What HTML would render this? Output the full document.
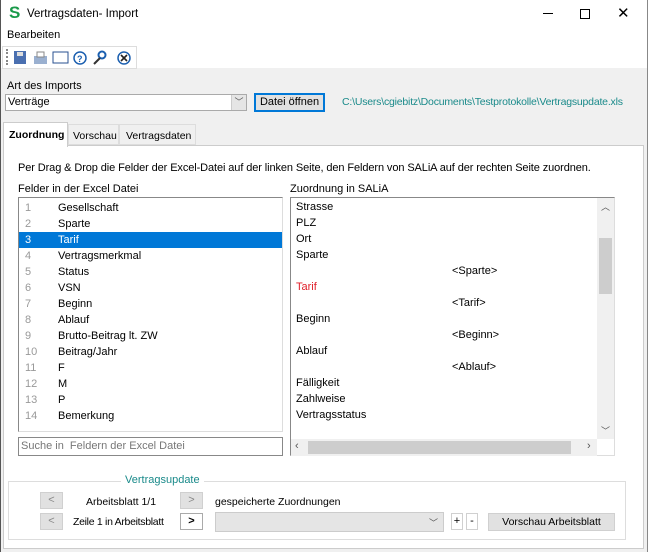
<!DOCTYPE html>
<html><head><meta charset="utf-8"><style>
*{box-sizing:border-box;margin:0;padding:0}
body{width:648px;height:552px;position:relative;background:#f0f0f0;font-family:"Liberation Sans",sans-serif;font-size:11px;color:#000;overflow:hidden}
.a{position:absolute;white-space:nowrap}
.row{position:absolute;height:16px;line-height:16px;left:0;right:0}
.btn{position:absolute;background:#e1e1e1;border:1px solid #d0d0d0;text-align:center;color:#888;font-size:11px}
</style></head><body>
<div class="a" style="left:0;top:0;width:648px;height:68px;background:#fff"></div>
<div class="a" style="left:0;top:0;width:1px;height:552px;background:#555"></div>
<div class="a" style="left:647px;top:0;width:1px;height:552px;background:#888"></div>
<div class="a" style="left:9px;top:3px;font-weight:bold;color:#1a9a4a;font-size:17px">S</div>
<div class="a" style="left:27px;top:8px;font-size:11.5px">Vertragsdaten- Import</div>
<div class="a" style="left:543px;top:13px;width:10px;height:1px;background:#000"></div>
<div class="a" style="left:580px;top:9px;width:10px;height:10px;border:1px solid #000"></div>
<div class="a" style="left:617px;top:4px;font-size:15px">✕</div>
<div class="a" style="left:7px;top:29px">Bearbeiten</div>
<div class="a" style="left:2px;top:46px;width:135px;height:23px;border:1px solid #ddd;background:#fff"></div>
<div class="a" style="left:6px;top:49px;width:2px;height:16px;border-left:2px dotted #888"></div>
<svg class="a" style="left:12px;top:49px" width="125" height="18">
<rect x="2" y="2" width="12" height="13" fill="#4a6fb0"/><rect x="5" y="3" width="6" height="4" fill="#ddd"/>
<rect x="22" y="7" width="13" height="8" fill="#9ab0d0"/><rect x="25" y="3" width="7" height="5" fill="#fff" stroke="#888"/>
<rect x="41" y="3" width="15" height="11" fill="#fff" stroke="#2a5090"/>
<circle cx="68" cy="9" r="6" fill="#fff" stroke="#1b5fb0" stroke-width="1.5"/><text x="65" y="13" font-size="9" fill="#1b5fb0" font-weight="bold">?</text>
<circle cx="90" cy="6" r="3.5" fill="none" stroke="#1b5fb0" stroke-width="2"/><line x1="88" y1="9" x2="82" y2="15" stroke="#333" stroke-width="2"/>
<circle cx="112" cy="9" r="6" fill="#fff" stroke="#1b5fb0" stroke-width="1.5"/><path d="M109 6l6 6M115 6l-6 6" stroke="#222" stroke-width="1.6"/>
</svg>
<div class="a" style="left:7px;top:80px">Art des Imports</div>
<div class="a" style="left:5px;top:94px;width:242px;height:17px;background:#fff;border:1px solid #aaa;padding-left:2px;line-height:15px">Verträge</div>
<div class="a" style="left:231px;top:95px;width:15px;height:15px;background:#e5e5e5;border-left:1px solid #ccc;text-align:center;font-size:9px;line-height:15px;color:#555">﹀</div>
<div class="a" style="left:254px;top:93px;width:71px;height:19px;background:#e1e1e1;border:2px solid #0078d7;text-align:center;line-height:15px">Datei öffnen</div>
<div class="a" style="left:342px;top:96px;color:#1a8a8a;font-size:10.5px;letter-spacing:-0.2px">C:\Users\cgiebitz\Documents\Testprotokolle\Vertragsupdate.xls</div>
<div class="a" style="left:3px;top:145px;width:641px;height:404px;background:#fff;border:1px solid #ccc"></div>
<div class="a" style="left:3px;top:122px;width:65px;height:25px;background:#fff;border:1px solid #ccc;border-bottom:none;font-weight:bold;padding:6px 0 0 5px;font-size:10.5px">Zuordnung</div>
<div class="a" style="left:68px;top:124px;width:51px;height:21px;background:#f0f0f0;border:1px solid #ddd;padding:5px 0 0 4px;font-size:10.5px">Vorschau</div>
<div class="a" style="left:119px;top:124px;width:77px;height:21px;background:#f0f0f0;border:1px solid #ddd;padding:5px 0 0 6px;font-size:10.5px">Vertragsdaten</div>
<div class="a" style="left:18px;top:162px;letter-spacing:-0.1px">Per Drag &amp; Drop die Felder der Excel-Datei auf der linken Seite, den Feldern von SALiA auf der rechten Seite zuordnen.</div>
<div class="a" style="left:18px;top:183px">Felder in der Excel Datei</div>
<div class="a" style="left:290px;top:183px">Zuordnung in SALiA</div>
<div class="a" style="left:18px;top:197px;width:265px;height:235px;border:1px solid #888;border-right-color:#ddd;border-bottom-color:#ddd">
<div class="row" style="top:2px"><span class="a" style="left:6px;color:#999">1</span><span class="a" style="left:39px">Gesellschaft</span></div>
<div class="row" style="top:18px"><span class="a" style="left:6px;color:#999">2</span><span class="a" style="left:39px">Sparte</span></div>
<div class="row" style="top:34px;background:#0078d7;color:#fff"><span class="a" style="left:6px">3</span><span class="a" style="left:39px">Tarif</span></div>
<div class="row" style="top:50px"><span class="a" style="left:6px;color:#999">4</span><span class="a" style="left:39px">Vertragsmerkmal</span></div>
<div class="row" style="top:66px"><span class="a" style="left:6px;color:#999">5</span><span class="a" style="left:39px">Status</span></div>
<div class="row" style="top:82px"><span class="a" style="left:6px;color:#999">6</span><span class="a" style="left:39px">VSN</span></div>
<div class="row" style="top:98px"><span class="a" style="left:6px;color:#999">7</span><span class="a" style="left:39px">Beginn</span></div>
<div class="row" style="top:114px"><span class="a" style="left:6px;color:#999">8</span><span class="a" style="left:39px">Ablauf</span></div>
<div class="row" style="top:130px"><span class="a" style="left:6px;color:#999">9</span><span class="a" style="left:39px">Brutto-Beitrag lt. ZW</span></div>
<div class="row" style="top:146px"><span class="a" style="left:6px;color:#999">10</span><span class="a" style="left:39px">Beitrag/Jahr</span></div>
<div class="row" style="top:162px"><span class="a" style="left:6px;color:#999">11</span><span class="a" style="left:39px">F</span></div>
<div class="row" style="top:178px"><span class="a" style="left:6px;color:#999">12</span><span class="a" style="left:39px">M</span></div>
<div class="row" style="top:194px"><span class="a" style="left:6px;color:#999">13</span><span class="a" style="left:39px">P</span></div>
<div class="row" style="top:210px"><span class="a" style="left:6px;color:#999">14</span><span class="a" style="left:39px">Bemerkung</span></div>
</div>
<div class="a" style="left:18px;top:437px;width:265px;height:19px;border:1px solid #888;padding-left:2px;line-height:17px;color:#777">Suche in&nbsp; Feldern der Excel Datei</div>
<div class="a" style="left:290px;top:197px;width:325px;height:259px;border:1px solid #888;border-right-color:#ddd;border-bottom-color:#ddd">
<div class="row" style="top:1px;left:5px">Strasse</div>
<div class="row" style="top:17px;left:5px">PLZ</div>
<div class="row" style="top:33px;left:5px">Ort</div>
<div class="row" style="top:49px;left:5px">Sparte</div>
<div class="row" style="top:65px;left:161px">&lt;Sparte&gt;</div>
<div class="row" style="top:81px;left:5px;color:#e0202a">Tarif</div>
<div class="row" style="top:97px;left:161px">&lt;Tarif&gt;</div>
<div class="row" style="top:113px;left:5px">Beginn</div>
<div class="row" style="top:129px;left:161px">&lt;Beginn&gt;</div>
<div class="row" style="top:145px;left:5px">Ablauf</div>
<div class="row" style="top:161px;left:161px">&lt;Ablauf&gt;</div>
<div class="row" style="top:177px;left:5px">Fälligkeit</div>
<div class="row" style="top:193px;left:5px">Zahlweise</div>
<div class="row" style="top:209px;left:5px">Vertragsstatus</div>
<div class="a" style="left:306px;top:0;width:17px;height:241px;background:#f0f0f0"></div>
<div class="a" style="left:308px;top:40px;width:13px;height:56px;background:#cdcdcd"></div>
<div class="a" style="left:310px;top:2px;font-size:9px;color:#555">︿</div>
<div class="a" style="left:310px;top:226px;font-size:9px;color:#555">﹀</div>
<div class="a" style="left:0;top:241px;width:306px;height:17px;background:#f0f0f0"></div>
<div class="a" style="left:17px;top:243px;width:263px;height:13px;background:#cdcdcd"></div>
<div class="a" style="left:4px;top:242px;color:#555">‹</div>
<div class="a" style="left:296px;top:242px;color:#555">›</div>
</div>
<div class="a" style="left:8px;top:481px;width:618px;height:59px;border:1px solid #ddd"></div>
<div class="a" style="left:121px;top:474px;background:#fff;padding:0 4px;color:#1a8a8a">Vertragsupdate</div>
<div class="btn" style="left:40px;top:492px;width:23px;height:17px;line-height:15px">&lt;</div>
<div class="a" style="left:86px;top:496px;font-size:10.5px">Arbeitsblatt 1/1</div>
<div class="btn" style="left:180px;top:492px;width:23px;height:17px;line-height:15px">&gt;</div>
<div class="a" style="left:215px;top:496px;font-size:10.5px">gespeicherte Zuordnungen</div>
<div class="btn" style="left:40px;top:513px;width:23px;height:17px;line-height:15px">&lt;</div>
<div class="a" style="left:73px;top:516px;font-size:10.5px;letter-spacing:-0.3px">Zeile 1 in Arbeitsblatt</div>
<div class="btn" style="left:180px;top:513px;width:23px;height:17px;line-height:15px;color:#000;background:#fff;border-color:#aaa;font-weight:bold">&gt;</div>
<div class="a" style="left:215px;top:512px;width:229px;height:20px;background:#e5e5e5;border:1px solid #ccc"><span class="a" style="right:5px;top:3px;font-size:9px;color:#555">﹀</span></div>
<div class="btn" style="left:451px;top:513px;width:12px;height:17px;line-height:15px;color:#000;background:#fff">+</div>
<div class="btn" style="left:466px;top:513px;width:12px;height:17px;line-height:15px;color:#000;background:#fff">-</div>
<div class="btn" style="left:488px;top:513px;width:127px;height:18px;line-height:16px;color:#000;font-size:10.5px">Vorschau Arbeitsblatt</div>
</body></html>
